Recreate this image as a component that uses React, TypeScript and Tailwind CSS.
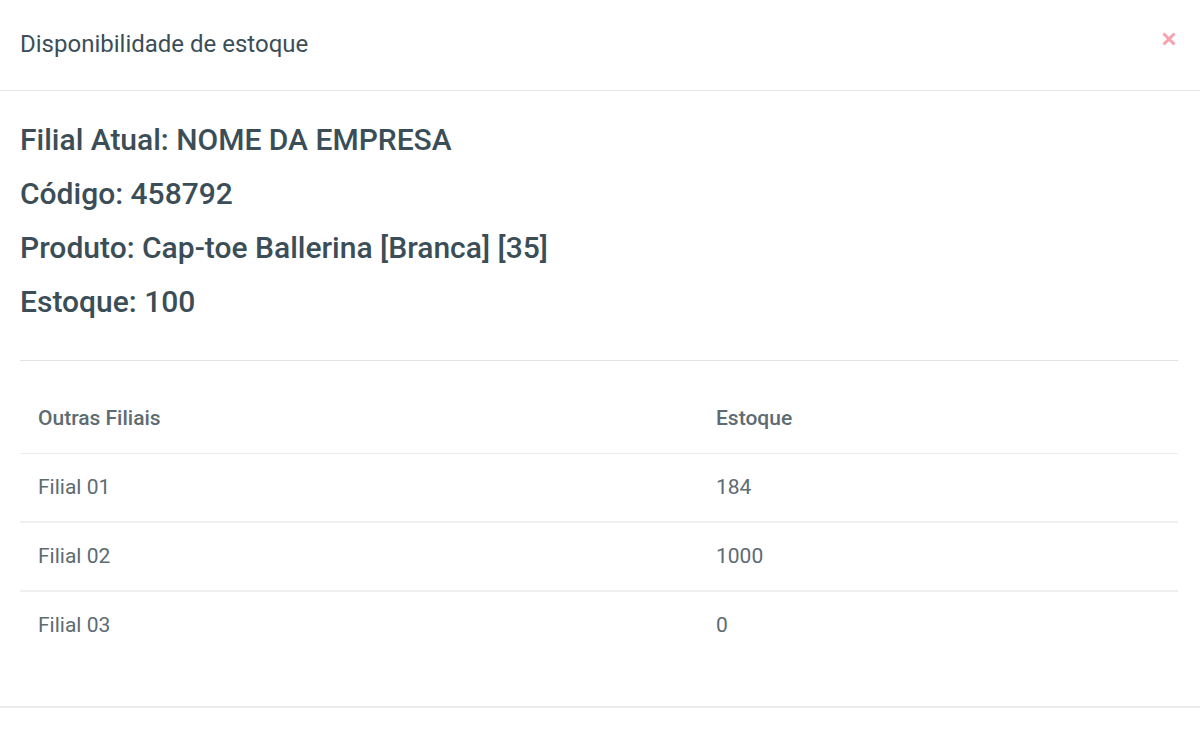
import React from "react";

const rows = [
  { name: "Filial 01", qty: "184" },
  { name: "Filial 02", qty: "1000" },
  { name: "Filial 03", qty: "0" },
];

export default function App() {
  return (
    <div className="w-[1200px] h-[749px] bg-white overflow-hidden" style={{ fontFamily: "Roboto, 'Noto Sans', sans-serif" }}>
      <div className="h-[91px] border-b border-[#e6e6e6] flex items-center justify-between pl-5 pr-[23px]">
        <h1 className="text-[24px] text-[#3b4e58] font-normal leading-none pb-[2px]">Disponibilidade de estoque</h1>
        <button className="leading-none pb-[12px]">
          <svg width="16" height="16" viewBox="0 0 16 16">
            <path d="M2.5 2.5 L13.5 13.5 M13.5 2.5 L2.5 13.5" stroke="#f7a1b1" strokeWidth="3" strokeLinecap="butt" />
          </svg>
        </button>
      </div>
      <div className="pl-5 pr-[22px] pt-[32px]">
        <div className="flex flex-col gap-[20px] text-[30px] font-medium text-[#3b4e58] leading-[34px]">
          <p>Filial Atual: NOME DA EMPRESA</p>
          <p>Código: 458792</p>
          <p>Produto: Cap-toe Ballerina [Branca] [35]</p>
          <p>Estoque: 100</p>
        </div>
        <div className="border-t border-[#e3e3e3] mt-[41px]" />
        <table className="w-full table-fixed mt-[23px] text-[21px] text-[#5d6b72] border-collapse">
          <colgroup>
            <col className="w-[696px]" />
            <col />
          </colgroup>
          <thead>
            <tr className="border-b border-[#ececec]">
              <th className="h-[69px] text-left font-medium px-[18px]">Outras Filiais</th>
              <th className="h-[69px] text-left font-medium px-0">Estoque</th>
            </tr>
          </thead>
          <tbody>
            {rows.map((r, i) => (
              <tr key={r.name} className={i < rows.length - 1 ? "border-b-2 border-[#efefef]" : ""}>
                <td className="h-[69px] px-[18px]">{r.name}</td>
                <td className="h-[69px] px-0">{r.qty}</td>
              </tr>
            ))}
          </tbody>
        </table>
      </div>
      <div className="border-t-2 border-[#ececec] mt-[46px]" />
    </div>
  );
}
